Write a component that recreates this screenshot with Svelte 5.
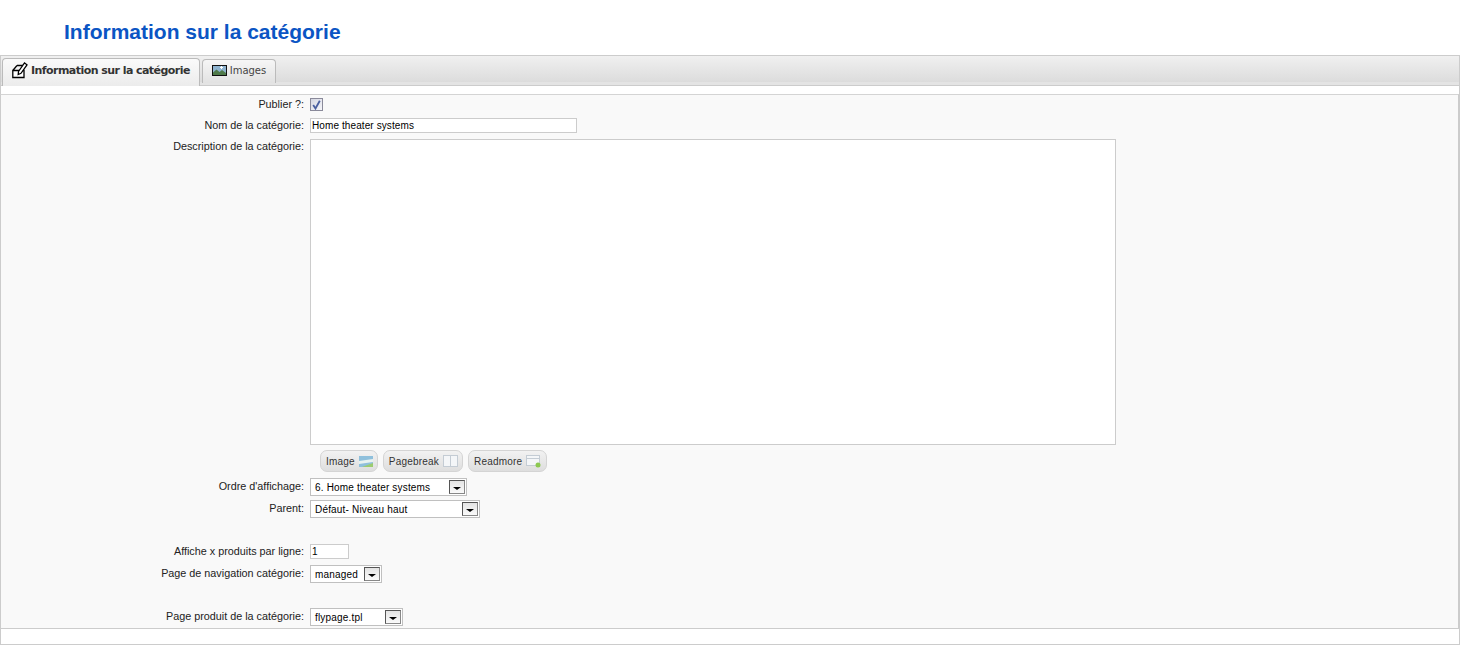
<script>
  const buttons = ['Image', 'Pagebreak', 'Readmore'];
</script>

{#snippet arrow()}
  <span class="arrow"><i></i></span>
{/snippet}

<div class="page">
  <h1>Information sur la catégorie</h1>

  <div class="box">
    <div class="tabbar">
      <div class="tab active">
        <svg width="16" height="17" viewBox="0 0 16 17">
          <path d="M5 3.500H11M12 8.500V15.500H0.800V8.500Z M0.800 8.500 5 3.500" fill="#fff" stroke="#000" stroke-width="1.300" />
          <path d="M6.500 9.500 12.500 1 15 2.800 9 11.300 6.200 12.500Z" fill="#fff" stroke="#000" stroke-width="1.300" />
        </svg>
        Information sur la catégorie
      </div>
      <div class="tab">
        <svg width="15" height="11" viewBox="0 0 15 11">
          <rect x="0.500" y="0.500" width="14" height="10" fill="#8fb4d0" stroke="#111" />
          <path d="M1 10V7.500L4.500 4.500 7.500 7 10 5 14 8V10Z" fill="#4f7a4a" />
          <path d="M8 2.500h3M9.500 1v3" stroke="#fff" />
        </svg>
        Images
      </div>
    </div>

    <div class="panel">
      <div class="row first">
        <span class="label">Publier ?:</span>
        <span class="check">
          <svg width="9" height="10" viewBox="0 0 9 10"><path d="M1.200 5 3.500 8.500 7.800 0.800" fill="none" stroke="#4a5fa0" stroke-width="1.800" /></svg>
        </span>
      </div>
      <div class="row name">
        <span class="label">Nom de la catégorie:</span>
        <span class="input wide">Home theater systems</span>
      </div>
      <div class="row desc">
        <span class="label">Description de la catégorie:</span>
        <div class="editor"></div>
      </div>
      <div class="buttons">
        {#each buttons as b}
          <span class="btn">
            {b}
            {#if b === 'Image'}
              <svg width="14" height="11" viewBox="0 0 14 11">
                <rect width="14" height="11" fill="#8fc0dc" />
                <path d="M0 5 14 3V6L0 8Z" fill="#e8f2f0" />
                <path d="M3 11 14 7V11Z" fill="#9ccc70" />
              </svg>
            {:else if b === 'Pagebreak'}
              <svg width="15" height="12" viewBox="0 0 15 12">
                <rect x="0.500" y="0.500" width="14" height="11" fill="#f4f6f8" stroke="#c4ccd4" />
                <path d="M7.500 0V12" stroke="#c4ccd4" />
              </svg>
            {:else}
              <svg width="16" height="13" viewBox="0 0 16 13">
                <rect x="0.500" y="0.500" width="13" height="10" fill="#f4f6f8" stroke="#c4ccd4" />
                <path d="M1 3.500H13" stroke="#c4ccd4" />
                <circle cx="12" cy="10" r="2.500" fill="#8cc850" />
              </svg>
            {/if}
          </span>
        {/each}
      </div>
      <div class="row order">
        <span class="label">Ordre d'affichage:</span>
        <span class="select order-select">6. Home theater systems {@render arrow()}</span>
      </div>
      <div class="row parent">
        <span class="label">Parent:</span>
        <span class="select parent-select">Défaut- Niveau haut {@render arrow()}</span>
      </div>
      <div class="row perline">
        <span class="label">Affiche x produits par ligne:</span>
        <span class="input small">1</span>
      </div>
      <div class="row nav">
        <span class="label">Page de navigation catégorie:</span>
        <span class="select nav-select">managed {@render arrow()}</span>
      </div>
      <div class="row flypage">
        <span class="label">Page produit de la catégorie:</span>
        <span class="select fly-select">flypage.tpl {@render arrow()}</span>
      </div>
    </div>
  </div>
</div>

<style>
  :global(body) {
    background: #fff;
    font-family: "Liberation Sans", Arial, sans-serif;
    font-size: 10.8px;
    color: #222;
  }

  .page {
    width: 1460px;
    height: 662px;
    box-sizing: border-box;
  }

  h1 {
    box-sizing: border-box;
    height: 55px;
    margin: 0;
    padding: 18px 0 0 64px;
    font-size: 21px;
    line-height: 27px;
    font-weight: bold;
    color: #0b55c4;
  }

  .box {
    box-sizing: border-box;
    height: 590px;
    border: 1px solid #ccc;
  }

  .tabbar {
    box-sizing: border-box;
    display: flex;
    align-items: flex-start;
    gap: 2px;
    height: 30px;
    padding: 2px 0 0 1px;
    background: linear-gradient(#f0f0f0, #dcdcdc 90%, #e4e4e4 90%);
    border-bottom: 1px solid #ccc;
  }

  .tab {
    box-sizing: border-box;
    display: flex;
    align-items: center;
    gap: 3px;
    height: 24px;
    margin-top: 1px;
    padding: 0 9px 3px;
    border: 1px solid #bbb;
    border-bottom: 0;
    border-radius: 4px 4px 0 0;
    background: linear-gradient(#f6f6f6, #e2e2e2);
    color: #444;
    font-family: "DejaVu Sans", sans-serif;
    font-size: 10px;
    letter-spacing: -0.05px;
  }

  .tab.active {
    height: 28px;
    margin-top: 0;
    padding: 0 9px 5px;
    background: linear-gradient(#fafafa, #ececec);
    color: #333;
    font-weight: bold;
    font-size: 11px;
    letter-spacing: -0.55px;
  }

  .panel {
    box-sizing: border-box;
    height: 535px;
    margin: 8px 0 0 -1px;
    padding-top: 1px;
    background: #f9f9f9;
    border: 1px solid #ccc;
    border-top-color: #d4d4d4;
  }

  .row {
    display: flex;
    align-items: flex-start;
  }

  .label {
    flex: none;
    box-sizing: border-box;
    width: 303px;
    text-align: right;
    line-height: 14px;
  }

  .check {
    display: flex;
    align-items: center;
    justify-content: center;
    box-sizing: border-box;
    width: 13px;
    height: 13px;
    margin-left: 6px;
    margin-top: 1px;
    border: 1px solid #8a8a9a;
    background: linear-gradient(135deg, #d4d6e2, #f6f6fa);
  }

  .first { height: 19px; padding-top: 1px; box-sizing: border-box; }

  .input {
    box-sizing: border-box;
    display: block;
    height: 15px;
    margin-left: 6px;
    padding-left: 1px;
    border: 1px solid #ccc;
    background: #fff;
    font-size: 10px;
    line-height: 13px;
    letter-spacing: 0.1px;
    color: #000;
  }

  .wide { width: 267px; }
  .small { width: 39px; }

  .name { height: 24px; padding-top: 3px; box-sizing: border-box; }
  .name .label { line-height: 15px; }

  .editor {
    box-sizing: border-box;
    width: 806px;
    height: 306px;
    margin-left: 6px;
    border: 1px solid #ccc;
    background: #fff;
  }

  .buttons {
    display: flex;
    gap: 5px;
    height: 22px;
    margin: 5px 0 6px 319px;
  }

  .btn {
    box-sizing: border-box;
    display: flex;
    align-items: center;
    gap: 4px;
    height: 22px;
    padding: 0 4px 0 5px;
    border: 1px solid #d4d4d4;
    border-radius: 7px;
    background: linear-gradient(#f2f2f2, #dedede);
    font-size: 10px;
    letter-spacing: 0.2px;
    color: #333;
  }

  .select {
    box-sizing: border-box;
    display: flex;
    align-items: center;
    justify-content: space-between;
    height: 18px;
    margin-left: 6px;
    padding: 0 1px 0 4px;
    border: 1px solid #c0c0c0;
    background: #fff;
    font-size: 10px;
    letter-spacing: 0.18px;
    color: #000;
  }

  .arrow {
    box-sizing: border-box;
    display: flex;
    align-items: center;
    justify-content: center;
    width: 16px;
    height: 14px;
    border: 1px solid #555;
    border-right-color: #888;
    border-bottom-color: #888;
    background: linear-gradient(#e4e4e4, #fafafa);
  }

  .arrow i {
    width: 0;
    height: 0;
    margin-top: 3px;
    border: 3px solid transparent;
    border-top: 3px solid #000;
    border-bottom: 0;
    border-left-width: 4px;
    border-right-width: 4px;
  }

  .order-select { width: 157px; }
  .parent-select { width: 170px; }
  .nav-select { width: 72px; }
  .fly-select { width: 93px; }

  .order { height: 22px; }
  .parent { height: 26px; }
  .perline { height: 20px; padding-top: 18px; }
  .nav { height: 22px; padding-top: 1px; }
  .flypage { padding-top: 21px; }

  .order .label, .parent .label, .nav .label, .flypage .label {
    line-height: 15px;
    padding-top: 1px;
  }
</style>
